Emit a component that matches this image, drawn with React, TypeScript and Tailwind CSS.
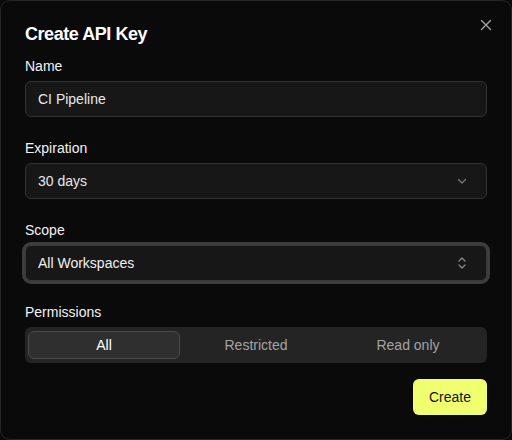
import React, { useState } from "react";

const font = { fontFamily: '"Liberation Sans", Arial, sans-serif' };

type Perm = "All" | "Restricted" | "Read only";

const Field: React.FC<{ label: string; children: React.ReactNode }> = ({ label, children }) => (
  <div className="flex flex-col gap-[5px]">
    <label className="text-sm leading-5 font-medium text-[#f2f2f2]">{label}</label>
    {children}
  </div>
);

export default function App() {
  const [name, setName] = useState("CI Pipeline");
  const [perm, setPerm] = useState<Perm>("All");

  return (
    <div style={font} className="w-[512px] h-[440px] bg-[#0a0a0a]">
      <div className="relative h-full flex flex-col rounded-[10px] border border-[#262626] bg-[#0a0a0a] px-6 pt-[19px] pb-6">
        <button className="absolute right-[18px] top-[17px] w-[14px] h-[14px] flex items-center justify-center text-[#a3a3a3]">
          <svg width="12" height="12" viewBox="0 0 12 12" fill="none" stroke="currentColor" strokeWidth="1.4" strokeLinecap="round">
            <path d="M1.5 1.5l9 9M10.5 1.5l-9 9" />
          </svg>
        </button>

        <h2 className="text-lg leading-7 font-bold tracking-tight text-white mb-2">Create API Key</h2>

        <div className="flex flex-col gap-[21px]">
          <Field label="Name">
            <input
              value={name}
              onChange={(e) => setName(e.target.value)}
              className="h-9 w-full rounded-md border border-[#333333] bg-[#171717] px-3 text-sm text-[#e8e8e8] outline-none"
            />
          </Field>

          <Field label="Expiration">
            <div className="h-9 w-full rounded-md border border-[#333333] bg-[#171717] px-3 flex items-center justify-between text-sm text-[#e8e8e8]">
              <span>30 days</span>
              <svg width="12" height="12" viewBox="0 0 12 12" fill="none" stroke="#7a7a7a" strokeWidth="1.3" strokeLinecap="round" strokeLinejoin="round" className="mr-[6px]">
                <path d="M2.5 4.5L6 8l3.5-3.5" />
              </svg>
            </div>
          </Field>

          <Field label="Scope">
            <div className="h-9 w-full rounded-md border border-[#3a3a3a] bg-[#171717] px-3 flex items-center justify-between text-sm text-[#f0f0f0] ring-[3px] ring-[#3d3d3d]">
              <span>All Workspaces</span>
              <svg width="12" height="14" viewBox="0 0 12 14" fill="none" stroke="#8a8a8a" strokeWidth="1.3" strokeLinecap="round" strokeLinejoin="round" className="mr-[6px]">
                <path d="M3 5l3-3 3 3M3 9l3 3 3-3" />
              </svg>
            </div>
          </Field>

          <Field label="Permissions">
            <div className="h-9 w-full rounded-md bg-[#242424] px-[3px] py-1 grid grid-cols-3">
              {(["All", "Restricted", "Read only"] as Perm[]).map((p) => (
                <button
                  key={p}
                  onClick={() => setPerm(p)}
                  className={
                    perm === p
                      ? "h-7 rounded-md border border-[#4a4a4a] bg-[#2f2f2f] text-sm text-white"
                      : "h-7 rounded-md border border-transparent text-sm text-[#a3a3a3]"
                  }
                >
                  {p}
                </button>
              ))}
            </div>
          </Field>
        </div>

        <div className="flex justify-end mt-4">
          <button className="h-9 px-4 rounded-md bg-[#f0ff70] text-sm text-[#141414]">Create</button>
        </div>
      </div>
    </div>
  );
}
